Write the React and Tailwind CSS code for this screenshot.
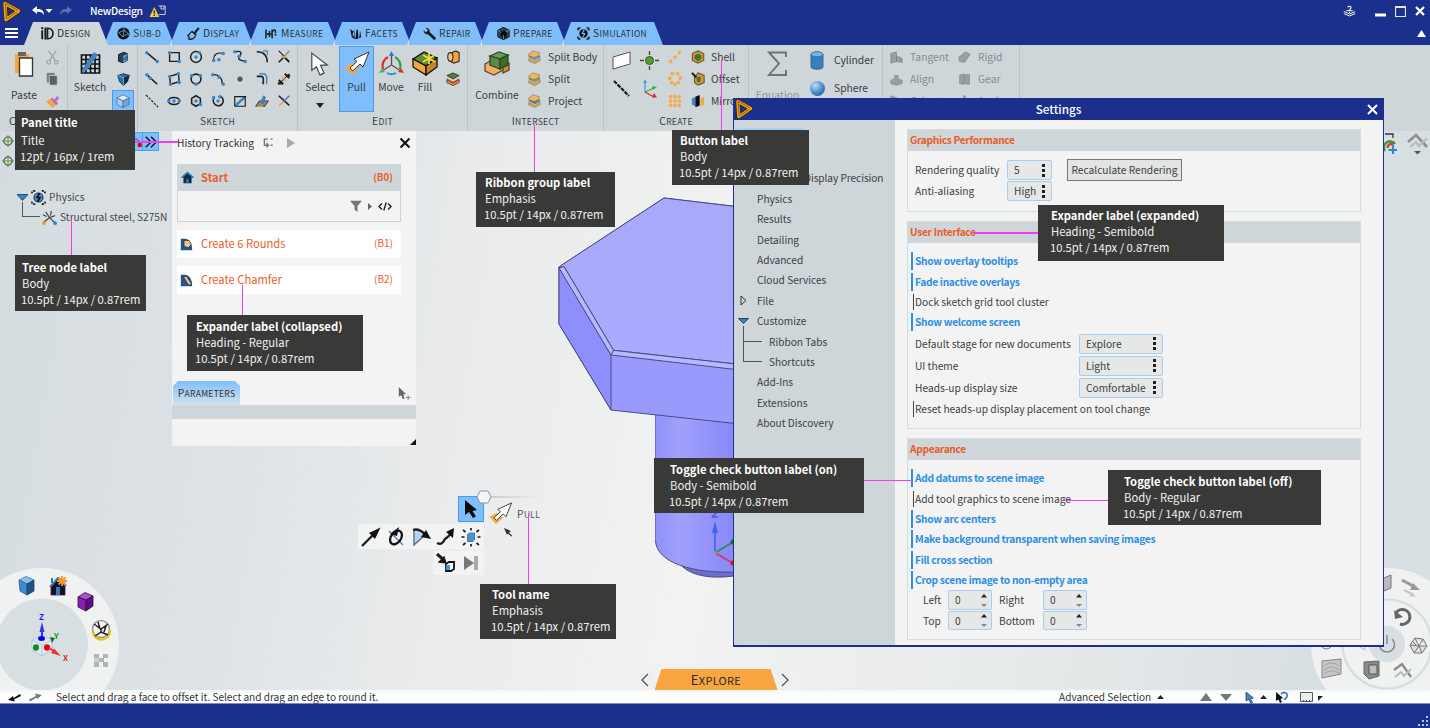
import React from "react";

const B = "#3b86c6";
const K = "#1e1e1e";
const O = "#f2a63c";

function Svg({ w = 16, h = w, vb = "0 0 16 16", className = "", children }) {
  return (
    <svg width={w} height={h} viewBox={vb} className={`shrink-0 ${className}`} fill="none" stroke={K} strokeWidth="1.3">
      {children}
    </svg>
  );
}

function Dots({ at, r = 2 }) {
  return at.map(([x, y], i) => <circle key={i} cx={x} cy={y} r={r} fill={B} stroke="none" />);
}

function Logo({ w = 19, h = 21 }) {
  return (
    <Svg w={w} h={h} vb="0 0 19 21">
      <path d="M3 2.500 L16.500 10 L4 18.500 Z" stroke="#33290f" strokeWidth="4.600" strokeLinejoin="round" />
      <path d="M3 2.500 L16.500 10 L4 18.500 Z" stroke="#f0a313" strokeWidth="3.400" strokeLinejoin="round" />
      <path d="M3 2 L16 9.500 M3.500 3 L4.300 17.500 M4.500 18 L15 11" stroke="#5a4414" strokeWidth=".7" />
      <path d="M5.600 6.500 L12.500 10.200 L6.200 14.600 Z" fill="#1c2f8c" stroke="#33290f" strokeWidth=".5" />
    </Svg>
  );
}

function Cube({ w = 14, h = w, top = "#6f9f57", left = "#f3ab4c", right = "#c27b24", line = K }) {
  return (
    <Svg w={w} h={h}>
      <path d="M8 1 L15 4.5 L8 8 L1 4.5 Z" fill={top} stroke={line} strokeWidth=".7" />
      <path d="M1 4.5 L8 8 V15.5 L1 12 Z" fill={left} stroke={line} strokeWidth=".7" />
      <path d="M15 4.5 L8 8 V15.5 L15 12 Z" fill={right} stroke={line} strokeWidth=".7" />
    </Svg>
  );
}

/* ---------- ribbon tabs ---------- */

const tabIcons = {
  Design: (
    <Svg w={13} h={13}>
      <path d="M1.5 4 V15" strokeWidth="2.4" /><circle cx="1.5" cy="1.4" r="1.4" fill={K} stroke="none" />
      <path d="M5.5 .5 V15.5" strokeWidth="2.6" />
      <path d="M8 1.5 C17 1 17 15 8 14.5 Z" strokeWidth="2" />
    </Svg>
  ),
  "Sub-D": (
    <Svg w={13}>
      <circle cx="8" cy="8" r="7.5" fill="#141414" stroke="none" />
      <path d="M2 7 L9 4 L14 8 L7 12 Z M9 4 L7 12 M9 4 L8 1 M14 8 L15 11" stroke="#7fb6e8" strokeWidth=".9" />
    </Svg>
  ),
  Display: (
    <Svg w={13}>
      <path d="M14.5 1 L9 8" strokeWidth="2.6" /><path d="M5.500 5 L11.500 10" strokeWidth="2" />
      <path d="M5.5 6 L1 10.5 C3 11 3 13 2 14.5 C6 16 9 14 10.5 10.5" strokeWidth="1.6" />
    </Svg>
  ),
  Measure: (
    <Svg w={14} h={12}>
      <path d="M1.3 2 V14 M6 4 V12 M9.5 2 V14 M1.3 8 H9.5" strokeWidth="2" />
      <path d="M10 5 C11 2 14 2 14 5 V7" strokeWidth="2" /><circle cx="14" cy="9" r="1.3" fill={K} stroke="none" />
    </Svg>
  ),
  Facets: (
    <Svg w={13} h={12}>
      <path d="M1 1 L3 12 L7 15 L6 6 Z M8 15 L9 4 L11 1 L12 14 Z M13 14 L14 3 L15.5 12 Z M4 9 L6 2 L8 15Z" fill="#141414" stroke="none" />
    </Svg>
  ),
  Repair: (
    <Svg w={13}>
      <path d="M6 6.5 L14 14" strokeWidth="3.4" strokeLinecap="round" />
      <path d="M3 1 L6 4 L5.5 6 L3.5 6.5 L.8 4 C.5 7.5 3.5 10 7 8.5 C9.5 6.5 8.5 .8 3 1 Z" fill={K} stroke="none" />
    </Svg>
  ),
  Prepare: (
    <Svg w={13}>
      <path d="M8 .5 L15 4 V12 L8 15.5 L1 12 V4 Z" fill="#2b4e70" /><path d="M4 6 L9 4.5 L12 7 V12 L7 13.5 L4 10 Z" fill="#0c0c0c" />
      <path d="M1 4 L5 7 M15 4 L11 6 M8 15 V10" stroke="#7fb6e8" strokeWidth=".8" />
    </Svg>
  ),
  Simulation: (
    <Svg w={13}>
      <circle cx="8" cy="8" r="5.2" fill="#111" stroke="none" />
      <path d="M9 3 L6.5 8 H9.5 L7 13" stroke="#7fc0ff" strokeWidth="1.3" />
      <path d="M4.5 1.2 C2 .5 .5 2 1.2 4.5 M11.5 1.2 C14 .5 15.5 2 14.8 4.5 M4.5 14.8 C2 15.5 .5 14 1.2 11.5 M11.5 14.8 C14 15.5 15.5 14 14.8 11.5" />
      <circle cx="2" cy="2" r="1.3" fill={K} stroke="none" /><circle cx="14" cy="2" r="1.3" fill={K} stroke="none" />
      <circle cx="2" cy="14" r="1.3" fill={K} stroke="none" /><circle cx="14" cy="14" r="1.3" fill={K} stroke="none" />
    </Svg>
  ),
};

const tabs = [
  ["Design", "w-[84px] pl-[17px]"],
  ["Sub-D", "w-[70px] pl-[13px]"],
  ["Display", "w-[83px] pl-[17px]"],
  ["Measure", "w-[88px] pl-[15px]"],
  ["Facets", "w-[78px] pl-[16px]"],
  ["Repair", "w-[77px] pl-[16px]"],
  ["Prepare", "w-[86px] pl-[17px]"],
  ["Simulation", "w-[101px] pl-[15px]"],
];

function Caps({ children, className = "" }) {
  return (
    <span className={`inline-block uppercase text-[8.5px] tracking-[.3px] first-letter:text-[10.4px] whitespace-nowrap ${className}`}>
      {children}
    </span>
  );
}

function TitleBar() {
  return (
    <header className="h-[22px] flex items-center text-white shrink-0 pl-[2px] pr-[4px]">
      <Logo />
      <Svg w={34} h={12} vb="0 0 34 12" className="ml-[10px]">
        <path d="M1 5 L6 1 V4 C11 3.5 13 6 13 10 C11 7 9 6.5 6 7 V9 Z" fill="#fff" stroke="none" />
        <path d="M14.5 4 H21.5 L18 8 Z" fill="#fff" stroke="none" />
      </Svg>
      <Svg w={14} h={12} vb="0 0 14 12" className="-ml-[6px]">
        <path d="M13 5 L8 1 V4 C3 3.5 1 6 1 10 C3 7 5 6.5 8 7 V9 Z" fill="#5d6fb4" stroke="none" />
      </Svg>
      <span className="ml-[17px] text-[10.3px] tracking-[-.28px] font-medium w-[54px]">NewDesign</span>
      <Svg w={17} h={13} vb="0 0 17 13" className="ml-[5px]">
        <path d="M9.5 1 H16.2 V9.5 H10 M12 1 V4 H15 V1" stroke="#c9cfe4" strokeWidth="1" />
        <path d="M5.3 2 L10.3 12 H.5 Z" fill="#f3cf3a" stroke="none" /><path d="M5.3 5.5 V8.6 M5.3 9.6 V10.9" strokeWidth="1.3" />
      </Svg>
      <div className="ml-auto flex items-center gap-[14px]">
        <Svg w={13} className="mr-[5px]">
          <path d="M1 8 L8 11 L15 8 M1 10.5 L8 13.5 L15 10.5 M4 7 H12" stroke="#fff" strokeWidth="1.2" />
          <path d="M6 3 C6 1 10 1 10 3 C10 4.5 8 4.5 8 7 M8 8 V10" stroke="#fff" strokeWidth="1.3" />
        </Svg>
        <Svg w={11} h={12} vb="0 0 11 12"><path d="M0 10 H11" stroke="#fff" strokeWidth="3" /></Svg>
        <Svg w={11} h={11} vb="0 0 11 11" className="-ml-[5px]"><path d="M.5 .5 H10.5 V10.5 H.5 Z M0 1.5 H11" stroke="#e4e6f0" strokeWidth="1.2" /></Svg>
        <Svg w={10} h={10} vb="0 0 10 10" className="-ml-[5px] mr-px"><path d="M1 1 L9 9 M9 1 L1 9" stroke="#fff" strokeWidth="2.2" /></Svg>
      </div>
    </header>
  );
}

function TabBar() {
  return (
    <nav className="h-[23px] flex shrink-0">
      <div className="w-[24px] pl-[5px] pt-[6px] flex flex-col gap-[2px]">
        <i className="block w-[13px] h-[2px] bg-white" /><i className="block w-[13px] h-[2px] bg-white" /><i className="block w-[13px] h-[2px] bg-white" />
      </div>
      {tabs.map(([name, size], i) => (
        <div
          key={name}
          className={`${size} relative flex items-center gap-[3px] -mr-[4px] [clip-path:polygon(9px_0,calc(100%-9px)_0,100%_100%,0_100%)] ${i === 0 ? "bg-[#ced6da] z-10" : "bg-[#7fbefb] shadow-[inset_2px_0_0_#cfe6fc]"}`}
        >
          {tabIcons[name]}
          <Caps className="-mt-px">{name}</Caps>
        </div>
      ))}
      <Svg w={9} h={7} vb="0 0 9 7" className="ml-auto mr-[4px] mt-[8px]"><path d="M0 7 L4.5 0 L9 7 Z" fill="#fff" stroke="none" /></Svg>
    </nav>
  );
}

/* ---------- ribbon ---------- */

function Group({ label, className = "", labelClass = "", children }) {
  return (
    <section className={`h-full flex flex-col shrink-0 border-r border-[#bbc3c7] ${className}`}>
      <div className="h-[67px] flex">{children}</div>
      <div className={`h-[17px] flex items-center justify-center ${labelClass}`}>{label && <Caps>{label}</Caps>}</div>
    </section>
  );
}

function Cell({ className = "", children }) {
  return <div className={`h-[22px] flex items-center shrink-0 whitespace-nowrap ${className}`}>{children}</div>;
}

const sketchIcons = [
  [<path d="M2 3 L14 13" strokeWidth="1.7" />, <Dots at={[[2, 3], [14, 13]]} />],
  [<path d="M3 3 H14 V13 H3 Z" strokeWidth="1.6" />, <Dots at={[[3, 3], [14, 13]]} />],
  [<circle cx="8" cy="8" r="6.2" strokeWidth="1.7" />, <Dots at={[[8, 8], [12, 3]]} />],
  [<path d="M3 11 C3 5 7 2 14 4" />, <Dots at={[[3, 12], [14, 4], [9, 11]]} />],
  [<path d="M3 2 C12 0 9 6 7 8 C5 11 9 12 14 13" strokeWidth="1.6" />, <Dots at={[[2, 2], [7, 7], [14, 13]]} />],
  [<path d="M2 2 C10 2 14 6 14 14" strokeWidth="1.6" />, <path d="M9 1 H14 V6" stroke={B} />],
  [<path d="M2 14 L8 8 L14 14" strokeWidth="1.8" />, <path d="M2 1 L14 13" stroke={K} />, <path d="M14 1 L8 8" stroke={B} />, <path d="M5 8 H11" stroke={O} strokeWidth="2" />],
  [<path d="M2 3 L14 14" strokeWidth="1.9" />, <Dots at={[[2, 3], [6, 7]]} r={2} />],
  [<path d="M3 5 L13 2 L14 11 L4 14 Z" strokeWidth="1.6" />, <Dots at={[[3, 5], [13, 2], [14, 12], [4, 14]]} />],
  [<circle cx="8" cy="8" r="5.6" strokeWidth="1.8" />, <Dots at={[[3, 4], [13, 4], [8, 14]]} />],
  [<path d="M3 3 C10 3 13 8 13 14" strokeWidth="1.6" />, <Dots at={[[2, 3], [9, 6], [14, 14]]} />],
  [<circle cx="8" cy="8" r="3" fill="#555" stroke="none" />],
  [<path d="M2 5 H7 C10 5 10 9 9 14" strokeWidth="1.8" />, <path d="M5 2 H9 C14 2 14 7 13 14" stroke={B} strokeWidth="1.6" />],
  [<path d="M2 14 L14 2" strokeWidth="1.2" />, <path d="M2 9 L7 14 M9 2 L14 7 M1 13 L7 13 M10 4 H15" strokeWidth="2.4" />, <path d="M5 5 L11 11" stroke={O} strokeWidth="1.6" />],
  [<path d="M1 1 L15 15" strokeDasharray="3 1.4" />],
  [<ellipse cx="8" cy="8" rx="6.4" ry="4" strokeWidth="1.8" />, <Dots at={[[8, 8], [2, 8], [14, 8]]} />],
  [<path d="M8 2 L13 5 V11 L8 14 L3 11 V5 Z" strokeWidth="1.8" />, <Dots at={[[8, 8], [13, 12]]} />],
  [<path d="M3 5 C0 14 13 17 14 8 C14 5 12 3 10 3" strokeWidth="1.8" />, <Dots at={[[8, 8], [3, 4], [10, 3]]} />],
  [<path d="M2 14 V3 H14 L3 14 H14 V3" strokeWidth="1.3" />, <path d="M3 13 L12 5" stroke={B} strokeWidth="3" />],
  [<path d="M1 14 L5 8 H15 L11 14 Z" fill="#8b8b8b" stroke="#444" />, <path d="M6 9 L10 2 L12 4 L9 11 Z" fill="#4a8dc4" stroke="#357" strokeWidth=".7" />, <path d="M2 14 H9" stroke={O} />],
  [<path d="M2 14 L8 8" stroke={O} strokeWidth="2" />, <path d="M2 2 L14 13" strokeWidth="1.8" />, <path d="M14 2 L8 8" stroke={B} strokeWidth="1.8" />],
];

function Arrow({ w = 24, h = 26 }) {
  return (
    <Svg w={w} h={h} vb="0 0 22 26">
      <path d="M2 1 L2 20 L7 16 L11 25 L15.5 23 L11.5 14.5 L19 14 Z" fill="#fff" stroke="#444" strokeWidth="1.3" />
    </Svg>
  );
}

function PullIcon({ w = 26, h = 25 }) {
  return (
    <Svg w={w} h={h} vb="0 0 26 25">
      <path d="M1 16 L9 12 L16 17 L8 24 Z" fill="#f5a83c" stroke="none" />
      <path d="M25 1 L10 8 L13 10.5 L6 17 L8.5 20 L16 13 L19 16 Z" fill="#fff" stroke="#333" strokeWidth="1" />
    </Svg>
  );
}

function Tool({ icon, text, className = "", textClass = "mt-[3px]" }) {
  return (
    <div className={`flex flex-col items-center shrink-0 pt-[6px] ${className}`}>
      <div className="h-[26px] flex items-start">{icon}</div>
      <span className={textClass}>{text}</span>
    </div>
  );
}

function Mini({ d, c = "#9a9fa1" }) {
  return <Svg w={13}><path d={d} fill={c} stroke="#7d8284" strokeWidth=".8" /></Svg>;
}

function Ribbon() {
  return (
    <div className="h-[86px] shrink-0 bg-[#ced6da] flex text-[10.3px] text-[#3a3d3f]">
      <Group label="Clipboard" className="w-[68px]" labelClass="pl-[1px]">
        <Tool className="w-[48px]" text="Paste" textClass="mt-[11px]" icon={
          <Svg w={20} h={26} vb="0 0 20 26">
            <path d="M1 3 H15 V22 H1 Z" fill="#f2a63c" stroke="none" /><path d="M4 1 H12 V5 H4 Z" fill="#666" stroke="none" />
            <path d="M5.5 7 H18.5 V25 H5.5 Z" fill="#fff" stroke="#333" />
          </Svg>} />
        <div className="flex flex-col pt-[1px] -ml-[3px]">
          <Cell><Svg w={15}><path d="M4 1 L11 11 M12 1 L5 11" stroke="#a3a8aa" strokeWidth="1.5" /><circle cx="4" cy="13" r="2" stroke="#a3a8aa" /><circle cx="12" cy="13" r="2" stroke="#a3a8aa" /></Svg></Cell>
          <Cell><Svg w={14}><path d="M2 1 H11 V12 H2 Z" fill="#7b8183" stroke="none" /><path d="M5 4 H14 V15 H5 Z" fill="#5b6062" stroke="#ced6da" strokeWidth=".8" /></Svg></Cell>
          <Cell><Svg w={15}><path d="M1 8 L6 5 L12 11 L8 15 Z" fill="#f5a83c" stroke="none" /><path d="M6 5 L8 4 L10 6 L13 2 L15 4 L12 8 L14 10 L12 12 Z" fill="#b665cf" stroke="none" /></Svg></Cell>
        </div>
      </Group>
      <Group className="w-[70px]">
        <Tool className="w-[44px]" text="Sketch" icon={
          <Svg w={21} h={24} vb="0 0 21 24">
            <path d="M1.5 4 H19.5 V22 H1.5 Z M1.5 8.5 H19.5 M1.5 13 H19.5 M1.5 17.5 H19.5 M6 4 V22 M10.5 4 V22 M15 4 V22" stroke="#111" strokeWidth="1.7" />
            <path d="M2 22 L3 17 L14 1 L18 4 L7 19 Z" fill="#3d86c8" stroke="none" />
          </Svg>} />
        <div className="flex flex-col items-center w-[22px] pt-[1px]">
          <Cell><Svg w={12} h={13}><path d="M2 4 L9 1 L14 3 V12 L8 15 L2 13 Z" fill="#24435f" /><path d="M8 6 L14 3 V12 L8 15 Z" fill="#5aa0dc" stroke="none" /><path d="M9 8 V13 M11 7 V12 M13 6 V11" strokeWidth=".7" /></Svg></Cell>
          <Cell><Svg w={13}><path d="M1 3 L8 1 L15 3 L13 10 L8 15 L3 10 Z" fill="#2d6da8" stroke="#246" /><path d="M8 6 L15 3 L13 10 L8 15 Z" fill="#122a42" stroke="none" /><path d="M1 3 L8 6 L8 15" stroke="#9fd0f8" strokeWidth=".8" /></Svg></Cell>
          <Cell className="w-[22px] justify-center bg-[#7fbefb] border border-[#4a9be8]"><Cube w={14} top="#dcecfa" left="#a9cdee" right="#6da6d9" line="#3b5f80" /></Cell>
        </div>
      </Group>
      <Group label="Sketch" className="w-[160px]">
        <div className="grid grid-cols-[repeat(7,22px)] pl-[3px] pt-[1px] content-start">
          {sketchIcons.map((parts, i) => (
            <Cell key={i} className="justify-center"><Svg w={14}>{parts.map((p, j) => <g key={j}>{p}</g>)}</Svg></Cell>
          ))}
        </div>
      </Group>
      <Group label="Edit" className="w-[170px]">
        <Tool className="w-[41px] pl-[3px]" icon={<Arrow w={20} />} text={<span className="flex flex-col items-center">Select<Svg w={8} h={5} vb="0 0 8 5" className="mt-[9px]"><path d="M0 0 H8 L4 5 Z" fill={K} stroke="none" /></Svg></span>} />
        <div className="w-[35px] h-[66px] mt-[1px] bg-[#7fbefb] border border-[#4a9be8]">
          <Tool className="!pt-[4px]" icon={<PullIcon />} text="Pull" />
        </div>
        <Tool className="w-[34px]" text="Move" icon={
          <Svg w={25} h={25} vb="0 0 25 25">
            <path d="M4 18 A10 10 0 0 1 9 6" stroke="#e03131" strokeWidth="2.4" /><path d="M16 6 A10 10 0 0 1 21 18" stroke="#27a844" strokeWidth="2.4" /><path d="M8 22 A9 9 0 0 0 17 22" stroke="#2a8fe0" strokeWidth="2" />
            <path d="M12.5 3 V14 L3 20 M12.5 14 L22 20" stroke="#555" strokeWidth="1.3" />
            <path d="M12.5 0 L15 5 H10 Z" fill="#1e7fd6" stroke="none" /><path d="M0 22 L3 17 L6 21 Z" fill="#2fc44d" stroke="none" /><path d="M25 22 L22 17 L19 21 Z" fill="#e03131" stroke="none" />
          </Svg>} />
        <Tool className="w-[34px]" text="Fill" icon={
          <Svg w={26} h={25} vb="0 0 26 25">
            <path d="M1 8 L12 1 L25 7 L14 15 Z" fill="#5c8a3c" stroke="#111" /><path d="M1 8 L14 15 V24 L1 16 Z" fill="#f2a63c" stroke="#111" /><path d="M25 7 L14 15 V24 L25 16 Z" fill="#c9822c" stroke="#111" />
            <path d="M17 1 V13 M11 4 L23 11 M23 4 L11 11" stroke="#f7e03a" strokeWidth="1.7" />
          </Svg>} />
        <div className="flex flex-col pt-[1px] pl-[4px]">
          <Cell><Svg w={14}><path d="M5 4 L11 1 L15 3 V13 L9 15 L5 13 Z" fill="#f2a63c" stroke="#333" /><ellipse cx="5" cy="8" rx="3" ry="5" fill="#f7c477" stroke="#333" /></Svg></Cell>
          <Cell><Svg w={14}><path d="M1 9 L8 13 L15 9 V12 L8 15.5 L1 12 Z" fill="#f2a63c" strokeWidth=".8" /><path d="M1 7 L8 11 L15 7 V9 L8 13 L1 9Z" fill="#d33" stroke="none" /><path d="M1 4 L8 1 L15 4 L8 8 Z" fill="#4f7f35" strokeWidth=".8" /></Svg></Cell>
        </div>
      </Group>
      <Group label="Intersect" className="w-[136px]">
        <Tool className="w-[58px]" text="Combine" textClass="mt-[11px]" icon={
          <Svg w={26} h={25} vb="0 0 26 25">
            <path d="M1 13 L8 9 L19 14 V19 L10 24 L1 20 Z" fill="#efb067" stroke="#5b4a30" /><path d="M25 12 V19 L19 22 V15 Z" fill="#d58c3c" stroke="#5b4a30" />
            <path d="M6 5 L15 1 L24 4 L16 8 Z" fill="#6c9c5a" stroke="#2c4a22" /><path d="M6 5 L16 8 V18 L6 14 Z" fill="#5a8a48" stroke="#2c4a22" /><path d="M24 4 L16 8 V18 L24 14 Z" fill="#3d6a30" stroke="#2c4a22" />
          </Svg>} />
        <div className="flex flex-col pt-[1px] pl-[1px]">
          {[["Split Body", "#6ba0d4"], ["Split", "#7fb25f"], ["Project", "#4a87bf"]].map(([t, c]) => (
            <Cell key={t} className="gap-[7px]">
              <Svg w={14}><path d="M2 10 L9 13 L15 9 V12 L9 15.5 L2 12.5 Z" fill="#f2a63c" stroke="#775" strokeWidth=".7" /><path d="M2 8 L9 11 L15 7.5 L9 5 Z" fill={c} stroke="#556" strokeWidth=".7" /><path d="M2 4.5 L7 1 L14 3 V6 L8 8.500 L2 6.500 Z" fill="#f5b558" stroke="#775" strokeWidth=".7" /></Svg>
              <span>{t}</span>
            </Cell>
          ))}
        </div>
      </Group>
      <Group label="Create" className="w-[145px]">
        <div className="flex flex-col gap-[9px] pt-[6px] pl-[8px]">
          <Svg w={19} h={19} vb="0 0 19 19"><path d="M1 6 L18 1 V13 L1 18 Z" fill="#fff" stroke="#555" strokeWidth="1" /></Svg>
          <Svg w={19} h={19} vb="0 0 19 19"><path d="M2 2 L17 17" strokeWidth="2.2" strokeDasharray="4 1" /></Svg>
        </div>
        <div className="flex flex-col gap-[9px] pt-[6px] pl-[9px]">
          <Svg w={19} h={19} vb="0 0 19 19"><path d="M9.5 0 V4 M9.5 15 V19 M0 9.5 H4 M15 9.5 H19" stroke="#444" /><circle cx="9.5" cy="9.5" r="4" fill="#5a9a30" stroke="#2d5a14" strokeWidth="1" /></Svg>
          <Svg w={19} h={19} vb="0 0 19 19"><path d="M5 13 V3" stroke="#3f9fd8" /><path d="M5 13 L14 9" stroke="#2eb84a" /><path d="M5 13 L14 18" stroke="#e02828" /><path d="M5 0 L7 4 H3 Z" fill="#3f9fd8" stroke="none" /><path d="M12 7 L17 8 L13 11 Z" fill="#20c030" stroke="none" /><path d="M12 18.5 L17 18.5 L14 14 Z" fill="#e02828" stroke="none" /></Svg>
        </div>
        <div className="flex flex-col pt-[1px] pl-[9px]">
          {[[[3, 13], [8, 8], [13, 3]], [[5, 2], [11, 2], [14, 7], [12, 12], [8, 14], [4, 12], [2, 7]], [[3, 3], [8, 3], [13, 3], [3, 8], [8, 8], [13, 8], [3, 13], [8, 13], [13, 13]]].map((a, i) => (
            <Cell key={i}><Svg w={14}>{a.map(([x, y]) => <circle key={x + "," + y} cx={x} cy={y} r="2.1" fill="#f5ab48" stroke="none" />)}</Svg></Cell>
          ))}
        </div>
        <div className="flex flex-col pt-[1px] pl-[9px]">
          <Cell className="gap-[6px]"><Svg w={14}><path d="M8 1 L14.5 4 V12 L8 15 L1.5 12 V4 Z" fill="#d9963e" stroke="#7a5522" /><path d="M8 4 L12 6 V10 L8 13 L4 10 V6 Z" fill="#3f7a2c" stroke="none" /></Svg><span>Shell</span></Cell>
          <Cell className="gap-[6px]"><Svg w={14}><path d="M8 1 L15 4 V12 L8 15 L4 12 V6 Z" fill="#d9963e" stroke="#7a5522" /><path d="M6 6 L11 5 V11 L7 12 Z" fill="#3f7a2c" stroke="none" /><path d="M1 1 L6 6" strokeWidth="2.4" /></Svg><span>Offset</span></Cell>
          <Cell className="gap-[6px]"><Svg w={14}><path d="M1 5 L5 3 V14 L1 12 Z" fill="#3d88cc" stroke="none" /><path d="M5 3 L10 1 V13 L5 15 Z" fill="#0e0e0e" stroke="none" /><path d="M11 5 L15 3 V12 L11 14 Z" fill="#f2a63c" stroke="none" /></Svg><span>Mirror</span></Cell>
        </div>
      </Group>
      <Group className="w-[134px]">
        <Tool className="w-[57px] text-[#8e9598]" text="Equation" textClass="mt-[11px]" icon={<Svg w={21} h={26} vb="0 0 21 26"><path d="M19 6 V1.5 H2 L12 12.5 L2 24 H19 V19" stroke="#6d7376" strokeWidth="1.9" /></Svg>} />
        <div className="flex flex-col pt-[1px] pl-[4px]">
          <div className="h-[28px] flex items-center gap-[10px]">
            <Svg w={14} h={19} vb="0 0 14 19"><path d="M1 3 V16 C1 19 13 19 13 16 V3" fill="#3a7fbd" stroke="#2b5a87" strokeWidth=".8" /><ellipse cx="7" cy="3.3" rx="6" ry="2.6" fill="#79b4e3" stroke="#2b5a87" strokeWidth=".8" /></Svg>
            <span>Cylinder</span>
          </div>
          <div className="h-[28px] flex items-center gap-[10px]">
            <i className="block w-[15px] h-[15px] rounded-full bg-[radial-gradient(circle_at_35%_30%,#b9dcf5,#3a7fbd_60%,#24527f)] -mr-px" />
            <span>Sphere</span>
          </div>
        </div>
      </Group>
      <Group className="w-[137px] text-[#858c8f]">
        <div className="grid grid-cols-[68px_60px] content-start pt-[1px] pl-[7px]">
          {[["Tangent", "M1 3 L8 1 V13 L1 15 Z M8 6 L15 9 V14 L8 13 Z"], ["Rigid", "M1 8 L9 1 L15 4 L8 14 L2 13 Z"], ["Align", "M1 9 L6 7 V3 L10 3 V7 L15 9 V13 L8 15 L1 13 Z"], ["Gear", "M2 3 L7 1 V14 L2 13 Z M8 2 L14 2 V14 L8 13 Z"], ["Orient", "M1 1 L15 6 V14 H1 Z"], ["Anchor", "M7 1 H9 V8 H15 L8 15 L1 8 H7 Z"]].map(([t, d]) => (
            <Cell key={t} className="gap-[7px]"><Mini d={d} /><span>{t}</span></Cell>
          ))}
        </div>
      </Group>
    </div>
  );
}

/* ---------- work area ---------- */

function Datum() {
  return <Svg w={12}><circle cx="8" cy="8" r="5.5" stroke="#222" strokeWidth="1.3" /><path d="M8 0 V16 M0 8 H16" stroke="#5aa02c" strokeWidth="1.3" /></Svg>;
}

function Tree() {
  return (
    <aside className="w-[172px] shrink-0 text-[10.2px] text-[#45494b] flex flex-col">
      <div className="h-[20px] flex items-center pl-[2px] pr-[13px] justify-between">
        <Datum />
        <div className="flex mt-px">
          <div className="w-[23px] h-[19px] bg-[#7fbefb] border border-[#4a9be8] flex items-center justify-end"><Svg w={12}><path d="M3 12 V7 C3 3 11 3 11 7" stroke="#333" /><circle cx="13" cy="12" r="3" fill="#e00000" stroke="none" /></Svg></div>
          <div className="w-[16px] h-[19px] bg-[#7fbefb] border border-l-0 border-[#4a9be8] flex items-center justify-center"><Svg w={12}><path d="M1 1 L8 8 L1 15 M8 1 L15 8 L8 15" stroke="#111" strokeWidth="1.8" /></Svg></div>
        </div>
      </div>
      <div className="h-[20px] flex items-center pl-[2px]"><Datum /></div>
      <div className="mt-[16px] h-[20px] flex items-center pl-[17px]">
        <Svg w={11} h={7} vb="0 0 11 7"><path d="M0 .5 H11 L5.5 6.5 Z" fill="#2a86dd" stroke="#223" strokeWidth=".7" /></Svg>
        <Svg w={15} className="ml-[3px] mr-[3px]">
          <circle cx="8" cy="8" r="4.8" fill="#4a90d0" stroke="#1d3f60" /><path d="M9 3.500 L6.500 8 H9.500 L7 12.500" stroke="#111" strokeWidth="1.8" />
          <path d="M4.500 1.200 C2 .5 .5 2 1.200 4.500 M11.500 1.200 C14 .5 15.500 2 14.800 4.500 M4.500 14.800 C2 15.500 .5 14 1.200 11.500 M11.500 14.800 C14 15.500 15.500 14 14.800 11.500" strokeDasharray="2 1" strokeWidth="1.8" />
        </Svg>
        <span>Physics</span>
      </div>
      <div className="h-[20px] flex items-center pl-[22px]">
        <i className="block shrink-0 w-[18px] h-[15px] border-l border-b border-[#555] -mt-[15px]" />
        <Svg w={15} className="ml-[2px] mr-[3px]">
          <path d="M8 8 L4 2 M8 8 L14 6 M8 8 L2 13 M8 8 L13 13 M1 5 L5 7 M10 1 L9 6" stroke="#444" />
          <circle cx="2" cy="14" r="2" fill="#e8a21c" stroke="none" /><circle cx="14" cy="14" r="2" fill="#3282cc" stroke="none" />
        </Svg>
        <span className="whitespace-nowrap">Structural steel, S275N</span>
      </div>
    </aside>
  );
}

function Block({ accent, name, code }) {
  return (
    <div className="h-[28px] bg-white flex items-center pl-[3px] pr-[8px] pb-[3px] text-[#e8602c]">
      <Svg w={13} className="mt-[3px]"><path d="M1 1 H7 C12 2 15 7 15 15 H1 Z" fill="#22568a" stroke="none" /><path d={accent === "round" ? "M5 3 L11 3 L14 8 L10 12 L5 10 Z" : "M4 3 L8 3 L14 12 L11 14 Z"} fill="#f6c292" stroke="#222" strokeWidth=".8" /></Svg>
      <span className="ml-[8px] text-[11.2px]">{name}</span>
      <span className="ml-auto text-[10px] pt-px">{code}</span>
    </div>
  );
}

function HistoryPanel() {
  return (
    <section className="w-[244px] h-[315px] shrink-0 bg-[#f3f3f3] flex flex-col text-[10.2px] text-[#333] z-10">
      <div className="h-[23px] flex items-center pl-[5px] pr-[5px]">
        <span className="w-[78px] whitespace-nowrap">History Tracking</span>
        <Svg w={11} className="ml-[8px]"><path d="M7 3 H2 V12 H7 M5 9 L8 12 L5 15 M11 3 H14 M11 12 H14" stroke="#777" strokeWidth="2" /></Svg>
        <Svg w={8} h={10} vb="0 0 8 10" className="ml-[13px]"><path d="M0 0 L8 5 L0 10 Z" fill="#a8a8a8" stroke="none" /></Svg>
        <Svg w={12} h={12} vb="0 0 12 12" className="ml-auto"><path d="M1.5 1.5 L10.5 10.5 M10.5 1.5 L1.5 10.5" strokeWidth="2.1" stroke="#111" /></Svg>
      </div>
      <div className="mt-[10px] ml-[5px] w-[224px] h-[58px] border border-[#ced6da] shrink-0">
        <div className="h-[26px] bg-[#ced6da] flex items-center pl-[3px] pr-[7px] pb-[2px] text-[#e8602c] font-semibold">
          <Svg w={13} className="mt-px"><path d="M0 8 L8 1 L16 8 H13 V15 H3 V8 Z" fill="#0f2c44" stroke="none" /><path d="M1 8 L8 2 L15 8" stroke="#2a80c8" strokeWidth="2" /><path d="M6.5 10 H9.5 V15 H6.5Z" fill="#2a80c8" stroke="none" /></Svg>
          <span className="ml-[7px] text-[11.2px]">Start</span>
          <span className="ml-auto text-[9.8px]">(B0)</span>
        </div>
        <div className="h-[30px] flex items-center justify-end pr-[8px] gap-[6px]">
          <Svg w={12}><path d="M0 1 H16 L10 8 V16 L6 13 V8 Z" fill="#777" stroke="none" /></Svg>
          <Svg w={4} h={7} vb="0 0 4 7"><path d="M0 0 L4 3.5 L0 7 Z" fill="#666" stroke="none" /></Svg>
          <Svg w={14} h={9} vb="0 0 14 9"><path d="M4 1.5 L1 4.5 L4 7.5 M10 1.5 L13 4.5 L10 7.5 M8.2 .5 L5.8 8.5" stroke="#222" strokeWidth="1.4" /></Svg>
        </div>
      </div>
      <div className="mt-[8px] ml-[5px] w-[224px] flex flex-col gap-[8px]">
        <Block accent="round" name="Create 6 Rounds" code="(B1)" />
        <Block accent="chamfer" name="Create Chamfer" code="(B2)" />
      </div>
      <div className="mt-auto h-[24px] flex shrink-0">
        <div className="ml-px w-[67px] h-[24px] flex items-center justify-center bg-linear-to-b from-[#7fbefb] to-[#d3e2ee] [clip-path:polygon(0_5px,5px_0,62px_0,100%_5px,100%_100%,0_100%)]"><Caps>Parameters</Caps></div>
        <Svg w={13} className="ml-auto mr-[5px] mt-[6px]"><path d="M1 0 V12 L4 10 L6 15 L8 14 L6.5 9 L10 9 Z" fill="#666" stroke="none" /><path d="M12.5 10 V16 M9.5 13 H15.5" stroke="#888" /></Svg>
      </div>
      <div className="h-[14px] bg-[#ced6da] shrink-0" />
      <div className="h-[27px] shrink-0 flex items-end justify-end pb-px"><Svg w={6} h={6} vb="0 0 6 6"><path d="M6 0 V6 H0 Z" fill="#111" stroke="none" /></Svg></div>
    </section>
  );
}

function Bolt() {
  return (
    <svg className="absolute left-[550px] top-[190px]" width="190" height="395" viewBox="550 190 190 395" stroke="#4a4a86" strokeWidth="1" strokeLinejoin="round">
      <defs>
        <linearGradient id="shaft" x1="0" x2="1"><stop offset="0" stopColor="#9191f8" /><stop offset=".3" stopColor="#a0a0fb" /><stop offset="1" stopColor="#8585fa" /></linearGradient>
        <linearGradient id="top" x1="0" x2="0" y1="0" y2="1"><stop offset="0" stopColor="#a9a9fb" /><stop offset="1" stopColor="#aaaafe" /></linearGradient>
      </defs>
      <path d="M680 564 C690 576 712 580 740 575 V560 Z" fill="#6b6bd0" />
      <path d="M655.5 410 V541 C657 562 690 574 740 572 V410 Z" fill="url(#shaft)" stroke="none" />
      <path d="M655.5 541 C657 562 690 574 740 572" fill="none" />
      <path d="M655.5 412 V541" fill="none" stroke="#6d6dd8" />
      <path d="M559 267 L664 198 L740 207 V424 L611 410 L559 324 Z" fill="#9a9afc" />
      <path d="M559 267 L611 355 V410 L559 324 Z" fill="#8e8efc" />
      <path d="M664 198 L740 207 V364.5 L613.5 350.3 L564 266.5 L559.5 268 L561 265.5 Z" fill="url(#top)" />
      <path d="M559 268 L564 266.5 L613.5 350.3 L740 364.5 V370 L611 355 Z" fill="#b8b8ff" />
      <path d="M611 355 L613.5 350.3" />
      <path d="M715 553 V532" stroke="#4a6fe8" strokeWidth="2" /><path d="M715 521 L718 533 H712 Z" fill="#3f66ee" stroke="none" />
      <path d="M715 553 L733 542" stroke="#2f8a5a" strokeWidth="2" /><path d="M715 553 L733 563" stroke="#e03060" strokeWidth="2" />
      <circle cx="733" cy="563" r="2.5" fill="#e01010" stroke="none" /><circle cx="733" cy="542" r="2.5" fill="#107030" stroke="none" />
      <circle cx="715" cy="553" r="2" fill="#999" stroke="none" />
      <path d="M712 511 H718 L712 517 H718" fill="none" stroke="#4a5cf0" strokeWidth="1.5" />
    </svg>
  );
}

function Pointer({ w = 20, children }) {
  return <Svg w={w} h={w} vb="0 0 20 20">{children}</Svg>;
}

function Hud() {
  return (
    <>
      <div className="absolute left-[358px] top-[496px] w-[126px] flex flex-col items-end">
        <div className="w-[26px] h-[26px] bg-[#7fbefb] border border-[#4a9be8] flex items-center justify-center"><Svg w={14} h={20} vb="0 0 14 20"><path d="M1 1 V16 L5 13 L9 19 L12 17.5 L8.5 12 L13 11 Z" fill="#0c0c0c" stroke="none" /></Svg></div>
        <div className="w-[126px] h-[25px] mt-[2px] bg-[#f2f3f3] flex items-center justify-around">
          <Pointer><path d="M1 19 L13 7" strokeWidth="2.4" /><path d="M19.500 .5 L8 6 L14 12 Z" fill="#111" stroke="none" /></Pointer>
          <Pointer><path d="M3 4 L17 18" stroke={B} /><ellipse cx="10" cy="10.500" rx="5" ry="7.500" transform="rotate(35 10 10.500)" strokeWidth="2.300" stroke="#111" /><path d="M13 0 L4 7 L11 9 Z" fill="#111" stroke="none" /></Pointer>
          <Pointer><path d="M3 2 V18 L14 8 C12 5 8 3 3 3" fill="#b9d4e8" stroke="#567" /><path d="M2 3 C7 1 11 4 15 8" strokeWidth="2.2" /><path d="M20 12 L10 10 L15 3 Z" fill="#111" stroke="none" /></Pointer>
          <Pointer><path d="M1 16 C5 18 7 16 9 12 C11 10 13 10 15 6" strokeWidth="2.4" /><path d="M18 1 L17 11 L10 5 Z" fill="#111" stroke="none" /></Pointer>
          <Pointer><path d="M6.500 7.500 L8.500 6 H13.500 V13 L11.500 14.500 H6.500 Z" fill="#4a93cf" stroke="#2d6797" strokeWidth=".8" /><path d="M10 1 V3.500 M10 17 V19.500 M.5 10 H3.500 M16.500 10 H19.500 M2 3 L4.500 5 M18 3 L15.500 5 M2 18 L4.500 16 M18 18 L15.500 16" strokeWidth="1.700" /></Pointer>
        </div>
        <div className="w-[51px] h-[24px] mt-[2px] bg-[#f2f3f3] flex items-center justify-around">
          <Pointer><path d="M1 1 L8 7" strokeWidth="3" /><path d="M3 9 L10 10 L8 4 Z" fill="#111" /><path d="M10 11 L13 9 H18 V16 L15 18 H10 Z" fill="#fff" stroke="#111" strokeWidth="1.8" /><path d="M10 12 H14 V17 H10Z" fill="#4a93cf" stroke="none" /></Pointer>
          <Pointer><path d="M3 3 L13 10 L3 17 Z" fill="#777" stroke="none" /><path d="M13 3 H17 V17 H13 Z" fill="#aaa" stroke="none" /></Pointer>
        </div>
      </div>
      <i className="absolute left-[490px] top-[496px] w-[50px] h-[2px] bg-linear-to-r from-[#c9cdd0] to-transparent" />
      <svg className="absolute left-[476px] top-[490px]" width="16" height="14" viewBox="0 0 16 14"><path d="M4 1 H12 L15 7 L12 13 H4 L1 7 Z" fill="#f5f6f8" stroke="#8a93ad" /></svg>
      <div className="absolute left-[488px] top-[502px] flex items-center"><PullIcon w={25} h={23} /><span className="ml-[4px] pb-[3px] text-[#555]"><Caps>Pull</Caps></span></div>
      <svg className="absolute left-[504px] top-[528px]" width="9" height="9" viewBox="0 0 9 9"><path d="M0 0 L7 3 L5 4.5 L8.5 8 L7.5 8.5 L4 5.5 L3 7 Z" fill="#333" /></svg>
    </>
  );
}

function LeftDial() {
  return (
    <svg className="absolute left-0 top-[567px]" width="122" height="123" viewBox="0 567 122 123">
      <circle cx="42" cy="645" r="77" fill="#f0f1f1" /><circle cx="42" cy="644.5" r="46" fill="#d8dfe2" />
      <g strokeLinejoin="round" strokeWidth=".8">
        <path d="M19 580 L26 576.5 L34 580 L27 584 Z" fill="#8bc0ea" stroke="#3a7ab0" /><path d="M19 580 L27 584 V595 L20 591 Z" fill="#3f8acb" stroke="#2a5f90" /><path d="M34 580 L27 584 V595 L34 591 Z" fill="#1b5487" stroke="#1b4770" />
        <path d="M51 586 L58 578 L65 586 V595 H51 Z" fill="#131320" stroke="#501060" /><path d="M50 587 L58 578 L66 586 M52 578 V583" fill="none" stroke="#2e7ac0" strokeWidth="2" /><rect x="56" y="587" width="4" height="8" fill="#2e7ac0" /><path d="M62 576 V586 M57 581 H67 M58.500 577.500 L65.500 584.500 M65.500 577.500 L58.500 584.500" stroke="#f2962a" strokeWidth="1.8" />
        <path d="M78 597 L85 592.500 L93 596 L86 600 Z" fill="#b04fd0" stroke="#301040" /><path d="M78 597 L86 600 V611 L78 607 Z" fill="#8a1fa8" stroke="#301040" /><path d="M93 596 L86 600 V611 L93 606 Z" fill="#5a0f88" stroke="#301040" />
      </g>
      <circle cx="101" cy="629" r="8.500" fill="#f4f4f4" stroke="#999" strokeWidth="1.600" /><path d="M93 632 A8.500 8.500 0 0 0 110 630" fill="none" stroke="#e8c020" strokeWidth="2.400" />
      <path d="M94 624 L101 629 L108 624 M101 629 V632 L95 636 M101 632 L108 635 M98 622 L100 629 M104 632 L106 626" fill="none" stroke="#222" strokeWidth="1.500" />
      <path d="M94 654 h5 v5 h-5 z M103 654 h5 v4 h-5 z M99 658 h5 v4 h-5 z M94 662 h5 v5 h-5 z M103 662 h5 v5 h-5 z" fill="#b2b5b6" /><path d="M94 658 h5 v4 h-5 z" fill="#d0d2d2" />
      <path d="M32 640 L42 635 L52 640 V650 L42 656 L32 650 Z" fill="#dce9f5" stroke="#a8bfd4" strokeWidth=".8" /><path d="M32 640 L42 645 L52 640 M42 645 V656" fill="none" stroke="#a8bfd4" strokeWidth=".8" />
      <path d="M42 637 V630" stroke="#3434e8" strokeWidth="2" /><path d="M42 622 L44.500 632 H39.500 Z" fill="#3434e8" />
      <ellipse cx="41.500" cy="638.500" rx="3.500" ry="2.500" fill="#0000f0" /><ellipse cx="36" cy="647.500" rx="3" ry="3.300" fill="#109018" /><ellipse cx="47" cy="647.500" rx="3" ry="3.300" fill="#f00000" />
      <path d="M50 637 L55 638 L52 643 Z" fill="#107a20" /><path d="M49 648 L54 651" stroke="#e83434" strokeWidth="2" /><path d="M61 656 L51 653 L54 648.500 Z" fill="#e83434" />
      <g fontFamily="Noto Sans CJK SC, sans-serif" fontSize="8" fontWeight="700"><text x="39" y="620" fill="#2020f0">Z</text><text x="54" y="639" fill="#1a8a2a">Y</text><text x="63" y="661" fill="#e82020">X</text></g>
    </svg>
  );
}

function RightDial() {
  return (
    <svg className="absolute left-[1308px] top-[566px]" width="122" height="124" viewBox="1308 566 122 124" fill="none">
      <circle cx="1387" cy="644" r="76" fill="#f0f1f1" /><circle cx="1387" cy="644" r="44.500" stroke="#d5dde0" strokeWidth="2.200" /><circle cx="1387" cy="644" r="18" fill="#d8dfe2" />
      <path d="M1382 639 A7.500 7.500 0 1 0 1392 639 M1387 635 V644" stroke="#888" strokeWidth="1.500" />
      <path d="M1384 578 L1391 575 V588 L1384 591" stroke="#777" fill="#bbb" />
      <path d="M1402 580 L1413 586" stroke="#999" strokeWidth="3" /><path d="M1420 590 L1410 590 L1413 583 Z" fill="#999" /><path d="M1404 590 L1412 594" stroke="#c8c8c8" strokeWidth="2" /><path d="M1416 597 L1409 596 L1412 592 Z" fill="#c8c8c8" />
      <path d="M1396 613 A7.500 7.500 0 1 1 1400 624" stroke="#666" strokeWidth="3" /><path d="M1394 610 L1395 619 L1403 617 Z" fill="#666" />
      <path d="M1410 645 L1415 638 L1423 639 L1427 646 L1422 653 L1414 653 Z M1415 638 L1419 646 L1427 646 M1410 645 L1419 646 L1414 653 M1419 646 L1423 639 M1412 641 L1416 645 M1419 646 L1422 653" fill="#ddd" stroke="#777" />
      <path d="M1322 661 L1341 659 V674 L1322 678 Z" fill="#c6c6c6" stroke="#888" /><path d="M1324 666 Q1331 660 1339 666 M1324 670 Q1331 664 1339 670 M1324 674 Q1331 668 1339 673" stroke="#999" strokeWidth=".8" />
      <path d="M1364 662 L1379 661 V676 L1369 679 L1364 674 Z" fill="#8a8a8a" stroke="#666" /><path d="M1369 665 H1377 V674 H1369 Z" fill="#bcbcbc" stroke="#555" />
      <path d="M1394 670 L1402 664 L1411 677" stroke="#888" strokeWidth="2.200" /><path d="M1395 677 L1401 672 L1404 676 L1411 669" stroke="#bbb" strokeWidth="2" />
      <path d="M1322 647 Q1326 651 1331 647" stroke="#777" /><path d="M1360 647 L1365 650 L1364 645" stroke="#bbb" />
    </svg>
  );
}

function StageBar() {
  return (
    <div className="absolute left-[628px] top-[669px] w-[176px] h-[21px] flex items-center justify-between px-[13px] bg-[#eff0f0] [clip-path:polygon(8px_0,calc(100%-8px)_0,100%_100%,0_100%)]">
      <Svg w={8} h={14} vb="0 0 8 14"><path d="M7 1 L1 7 L7 13" stroke="#555" /></Svg>
      <div className="w-[123px] h-full bg-[#f9a641] flex items-center justify-center text-[#2a2a2a] [clip-path:polygon(7px_0,calc(100%-7px)_0,100%_100%,0_100%)]">
        <Caps className="!text-[11px] !tracking-[.3px] first-letter:!text-[13px]">Explore</Caps>
      </div>
      <Svg w={8} h={14} vb="0 0 8 14" className="-ml-[2px] mr-[2px]"><path d="M1 1 L7 7 L1 13" stroke="#555" /></Svg>
    </div>
  );
}

function StatusBar() {
  return (
    <footer className="h-[14px] shrink-0 bg-linear-to-b from-[#f5f6f6] to-white to-40% flex items-center pl-[8px] pt-px text-[10.1px] text-[#333] leading-[12px] border-b border-[#7f8cc0]">
      <Svg w={13} h={9} vb="0 0 13 9"><path d="M0 7 L5 3 L5.500 5 L12 1 L13 3 L6 6.500 L7 8.500 Z" fill="#111" stroke="none" /></Svg>
      <Svg w={13} h={9} vb="0 0 13 9" className="ml-[8px]"><path d="M13 2 L8 6 L7.500 4.500 L1 8.500 L0 6.500 L7 3 L6 .5 Z" fill="#777" stroke="none" /></Svg>
      <span className="ml-[14px] w-[323px] whitespace-nowrap tracking-[-.02px]">Select and drag a face to offset it. Select and drag an edge to round it.</span>
      <span className="ml-auto w-[93px] whitespace-nowrap">Advanced Selection</span>
      <div className="w-[278px] flex items-center pl-[5px]">
        <Svg w={7} h={4} vb="0 0 7 4"><path d="M0 4 L3.500 0 L7 4 Z" fill="#222" stroke="none" /></Svg>
        <Svg w={12} h={8} vb="0 0 12 8" className="ml-[36px]"><path d="M0 8 L6 0 L12 8 Z" fill="#777" stroke="none" /></Svg>
        <Svg w={12} h={7} vb="0 0 12 7" className="ml-[8px]"><path d="M0 0 H12 L6 7 Z" fill="#777" stroke="none" /></Svg>
        <Svg w={9} h={13} vb="0 0 9 13" className="ml-[13px]"><path d="M1 1 V10 L3.500 8.500 L6 12.500 L7.500 11.500 L5.500 8 L8.500 7 Z" fill="#3d88cc" stroke="#234" strokeWidth=".7" /></Svg>
        <Svg w={7} h={4} vb="0 0 7 4" className="ml-[6px]"><path d="M0 4 L3.500 0 L7 4 Z" fill="#222" stroke="none" /></Svg>
        <Svg w={14} h={12} vb="0 0 14 12" className="ml-[8px]"><path d="M1 1 V10 L3.500 8.500 L5 12 L7 11 L5.500 8 L8 7 Z" fill="#111" stroke="none" /><path d="M6 3 C9 0 13 2 12 5 C12 7 10 8 9 8.500" stroke={B} strokeWidth="1.800" /></Svg>
        <Svg w={13} h={10} vb="0 0 13 10" className="ml-[11px]"><path d="M.5 .5 H12.500 V9.500 H.5 Z M3.500 8 V9 M6.500 8 V9 M9.500 8 V9" stroke="#555" strokeWidth="1" fill="#eee" /></Svg>
        <Svg w={5} h={5} vb="0 0 5 5" className="ml-[5px] mt-[3px]"><path d="M0 0 H5 L0 5 Z" fill="#222" stroke="none" /></Svg>
      </div>
    </footer>
  );
}

/* ---------- settings dialog ---------- */

const navItems = ["Physics", "Results", "Detailing", "Advanced", "Cloud Services", "File", "Customize", "Ribbon Tabs", "Shortcuts", "Add-Ins", "Extensions", "About Discovery"];

function Nav() {
  return (
    <div className="w-[161px] shrink-0 bg-[#ced6da] pt-[8px] pl-[3px] text-[10.15px]">
      <div className="w-[67px] h-[20.4px] bg-[#a6d2fa]" />
      <div className="h-[19.9px]" />
      <div className="h-[20.4px] flex items-center pl-[67px] tracking-[-.06px]">Display Precision</div>
      {navItems.map((t) => (
        <div key={t} className="h-[20.4px] flex items-center">
          <span className="w-[20px] flex justify-center pr-[7px]">
            {t === "File" && <Svg w={7} h={11} vb="0 0 7 11"><path d="M1 1 L6 5.500 L1 10 Z" stroke="#333" strokeWidth="1" /></Svg>}
            {t === "Customize" && <Svg w={11} h={6} vb="0 0 11 6"><path d="M.5 .5 H10.500 L5.500 5.500 Z" fill="#2a86dd" stroke="#222" strokeWidth=".8" /></Svg>}
          </span>
          {t === "Ribbon Tabs" && <i className="block w-[19px] h-[16px] -ml-[14px] mr-[7px] -mt-[16px] border-l border-b border-[#555]" />}
          {t === "Shortcuts" && <i className="block w-[19px] h-[21px] -ml-[14px] mr-[7px] -mt-[21px] border-l border-b border-[#555]" />}
          <span className="whitespace-nowrap">{t}</span>
        </div>
      ))}
    </div>
  );
}

function Section({ title, className, children }) {
  return (
    <section className={`w-[454px] shrink-0 border border-[#d3dcdf] ${className}`}>
      <h2 className="h-[21px] pb-[2px] bg-[#ced6da] flex items-center pl-[2px] font-semibold tracking-[-.32px] text-[#ea5d27]">{title}</h2>
      {children}
    </section>
  );
}

function Toggle({ on, children }) {
  return (
    <div className={`h-[20.4px] flex items-center pl-[3px] ${on ? "font-semibold tracking-[-.3px] text-[#2d8fe3]" : ""}`}>
      <i className={`block ${on ? "w-[2px] h-[18px] bg-[#2d8fe3] mr-[2px]" : "w-px h-[16px] bg-[#444] ml-[2px] mr-px"}`} />
      <span className="whitespace-nowrap">{children}</span>
    </div>
  );
}

function Select({ className, children }) {
  return (
    <div className={`h-[20px] rounded-[2px] border border-[#a9cdee] bg-[#e6e7e7] flex items-center justify-between pl-[6px] pr-[6px] ${className}`}>
      {children}
      <Svg w={3} h={13} vb="0 0 3 13"><path d="M0 0 h3 v3 h-3z M0 5 h3 v3 h-3z M0 10 h3 v3 h-3z" fill="#222" stroke="none" /></Svg>
    </div>
  );
}

function Spinner() {
  return (
    <div className="w-[44px] h-[19.500px] rounded-[2px] border border-[#a9cdee] bg-[#e6e7e7] flex items-center justify-between pl-[6px] pr-[4px]">
      0
      <Svg w={6} h={13} vb="0 0 6 13"><path d="M0 3.500 L3 0 L6 3.500 Z" fill="#222" stroke="none" /><path d="M0 10 L3 13 L6 10 Z" fill="#888" stroke="none" /></Svg>
    </div>
  );
}

function Field({ label, value }) {
  return (
    <div className="h-[22px] flex items-center pl-[7px]">
      <span className="w-[164px] whitespace-nowrap">{label}</span>
      <Select className="w-[84px]">{value}</Select>
    </div>
  );
}

function Settings() {
  return (
    <div className="absolute left-[733px] top-[98px] w-[651px] h-[549px] z-20 border border-t-0 border-b-2 border-[#1c3090] bg-[#f3f3f3] flex flex-col text-[10.2px] text-[#3c3f41]">
      <div className="h-[22px] bg-[#1b2f8c] flex items-center justify-between pl-px pr-[5px] text-white">
        <Logo w={18} h={20} />
        <span className="text-[11.700px] font-medium pr-[3px]">Settings</span>
        <Svg w={11} h={11} vb="0 0 11 11"><path d="M1 1 L10 10 M10 1 L1 10" stroke="#fff" strokeWidth="2" /></Svg>
      </div>
      <div className="flex flex-1 min-h-0">
        <Nav />
        <div className="pl-[12px] pt-[9px] flex flex-col">
          <Section title="Graphics Performance" className="h-[83px]">
            <div className="flex items-center pt-[8px] pl-[7px]">
              <span className="w-[92px] whitespace-nowrap">Rendering quality</span>
              <Select className="w-[45px]">5</Select>
              <div className="ml-[15px] w-[115px] h-[22px] border border-[#777] bg-[#e3e4e4] flex items-center justify-center whitespace-nowrap">Recalculate Rendering</div>
            </div>
            <div className="flex items-center pl-[7px]">
              <span className="w-[92px]">Anti-aliasing</span>
              <Select className="w-[45px]">High</Select>
            </div>
          </Section>
          <Section title="User Interface" className="h-[208px] mt-[9px]">
            <div className="h-[8px]" />
            <Toggle on>Show overlay tooltips</Toggle>
            <Toggle on>Fade inactive overlays</Toggle>
            <Toggle>Dock sketch grid tool cluster</Toggle>
            <Toggle on>Show welcome screen</Toggle>
            <Field label="Default stage for new documents" value="Explore" />
            <Field label="UI theme" value="Light" />
            <Field label="Heads-up display size" value="Comfortable" />
            <Toggle>Reset heads-up display placement on tool change</Toggle>
          </Section>
          <Section title="Appearance" className="h-[202px] mt-[9px]">
            <div className="h-[8px]" />
            <Toggle on>Add datums to scene image</Toggle>
            <Toggle>Add tool graphics to scene image</Toggle>
            <Toggle on>Show arc centers</Toggle>
            <Toggle on>Make background transparent when saving images</Toggle>
            <Toggle on>Fill cross section</Toggle>
            <Toggle on>Crop scene image to non-empty area</Toggle>
            <div className="grid grid-cols-[25px_51px_44px_44px] gap-y-px pl-[15px] items-center">
              <span>Left</span><Spinner /><span>Right</span><Spinner />
              <span>Top</span><Spinner /><span>Bottom</span><Spinner />
            </div>
          </Section>
        </div>
      </div>
    </div>
  );
}

/* ---------- annotations ---------- */

const callouts = [
  ["Panel title", "Title", "12pt / 16px / 1rem", "left-[15px] top-[110px] w-[120px] h-[60px] pl-[6px] pt-[4px]"],
  ["Tree node label", "Body", null, "left-[15px] top-[255px] w-[131px] h-[56px] pl-[7px] pt-[4px]"],
  ["Expander label (collapsed)", "Heading - Regular", null, "left-[187px] top-[315px] w-[176px] h-[56px] pl-[9px] pt-[3px]"],
  ["Ribbon group label", "Emphasis", null, "left-[476px] top-[172px] w-[139px] h-[55px] pl-[9px] pt-[2px]"],
  ["Button label", "Body", null, "left-[672px] top-[130px] w-[137px] h-[55px] pl-[8px] pt-[2px]"],
  ["Expander label (expanded)", "Heading - Semibold", null, "left-[1038px] top-[205px] w-[186px] h-[56px] pl-[13px] pt-[2px]"],
  ["Toggle check button label (on)", "Body - Semibold", null, "left-[654px] top-[458px] w-[210px] h-[55px] pl-[16px] pt-[3px]"],
  ["Toggle check button label (off)", "Body - Regular", null, "left-[1108px] top-[470px] w-[213px] h-[55px] pl-[16px] pt-[3px]"],
  ["Tool name", "Emphasis", null, "left-[480px] top-[584px] w-[136px] h-[55px] pl-[12px] pt-[2px]"],
];

const leaders = [
  "left-[135px] top-[141px] w-[43px] h-[2px]",
  "left-[71px] top-[220px] w-px h-[35px]",
  "left-[242px] top-[285px] w-px h-[30px]",
  "left-[534px] top-[125px] w-px h-[47px]",
  "left-[721px] top-[60px] w-px h-[70px]",
  "left-[973px] top-[232px] w-[65px] h-[2px]",
  "left-[864px] top-[480px] w-[48px] h-px",
  "left-[1064px] top-[500px] w-[44px] h-px",
  "left-[528px] top-[514px] w-px h-[70px]",
];

function Annotations() {
  return (
    <>
      {leaders.map((c) => <i key={c} className={`absolute z-30 bg-[#f23cf0] ${c}`} />)}
      {callouts.map(([title, kind, size, c], i) => (
        <div key={title} className={`absolute z-30 bg-[#393a38] text-[#f0f0f0] text-[11.25px] leading-[16px] whitespace-nowrap ${c}`}>
          <div className={`font-bold text-white ${i === 0 ? "mb-[2px]" : ""}`}>{title}</div>
          <div>{kind}</div>
          <div className="-ml-px">{size || "10.5pt / 14px / 0.87rem"}</div>
        </div>
      ))}
    </>
  );
}

export default function App() {
  return (
    <div className="relative w-[1430px] h-[728px] overflow-hidden flex flex-col bg-[#1b2f8c] leading-[14px] text-[#2f3234] [font-family:'Noto_Sans_CJK_SC','Open_Sans',sans-serif]">
      <TitleBar />
      <TabBar />
      <Ribbon />
      <main className="h-[559px] shrink-0 flex items-start justify-between bg-[linear-gradient(100deg,#d5dce0_0%,#dce2e5_18%,#e9ebec_32%,#f1f2f1_50%,#e9ecec_70%,#d8dfe2_92%)]">
        <div className="flex">
          <Tree />
          <HistoryPanel />
        </div>
        <div className="flex pt-[2px] pr-[2px] gap-[10px]">
          <Svg w={16} h={22} vb="0 0 16 22"><path d="M4 1 H12 V5" stroke="#333" /><path d="M4 18 A6 6 0 1 1 14 11" stroke="#2f9a3c" strokeWidth="2.500" /><path d="M7 15 A3 3 0 0 1 12 12" stroke="#e04020" strokeWidth="2.500" /><path d="M12 12 V21 M7.500 17 H16" stroke="#2f86d6" strokeWidth="2.200" /></Svg>
          <Svg w={21} h={22} vb="0 0 21 22"><path d="M1 9 L9 2 L20 14" stroke="#8f8f8f" strokeWidth="2.600" /><path d="M3 14 L9 9 L12 13 L20 5" stroke="#bbb" strokeWidth="2.200" /><path d="M7 18 H14 L10.500 21.500 Z" fill="#555" stroke="none" /></Svg>
        </div>
      </main>
      <StatusBar />
      <div className="flex-1 flex items-end justify-end p-[2px]">
        <Svg w={11} h={11} vb="0 0 11 11"><path d="M9 1h2v2h-2z M9 5h2v2h-2z M9 9h2v2h-2z M5 5h2v2h-2z M5 9h2v2h-2z M1 9h2v2h-2z" fill="#b9c2e2" stroke="none" /></Svg>
      </div>
      <Bolt />
      <Hud />
      <LeftDial />
      <RightDial />
      <StageBar />
      <Settings />
      <Annotations />
    </div>
  );
}
